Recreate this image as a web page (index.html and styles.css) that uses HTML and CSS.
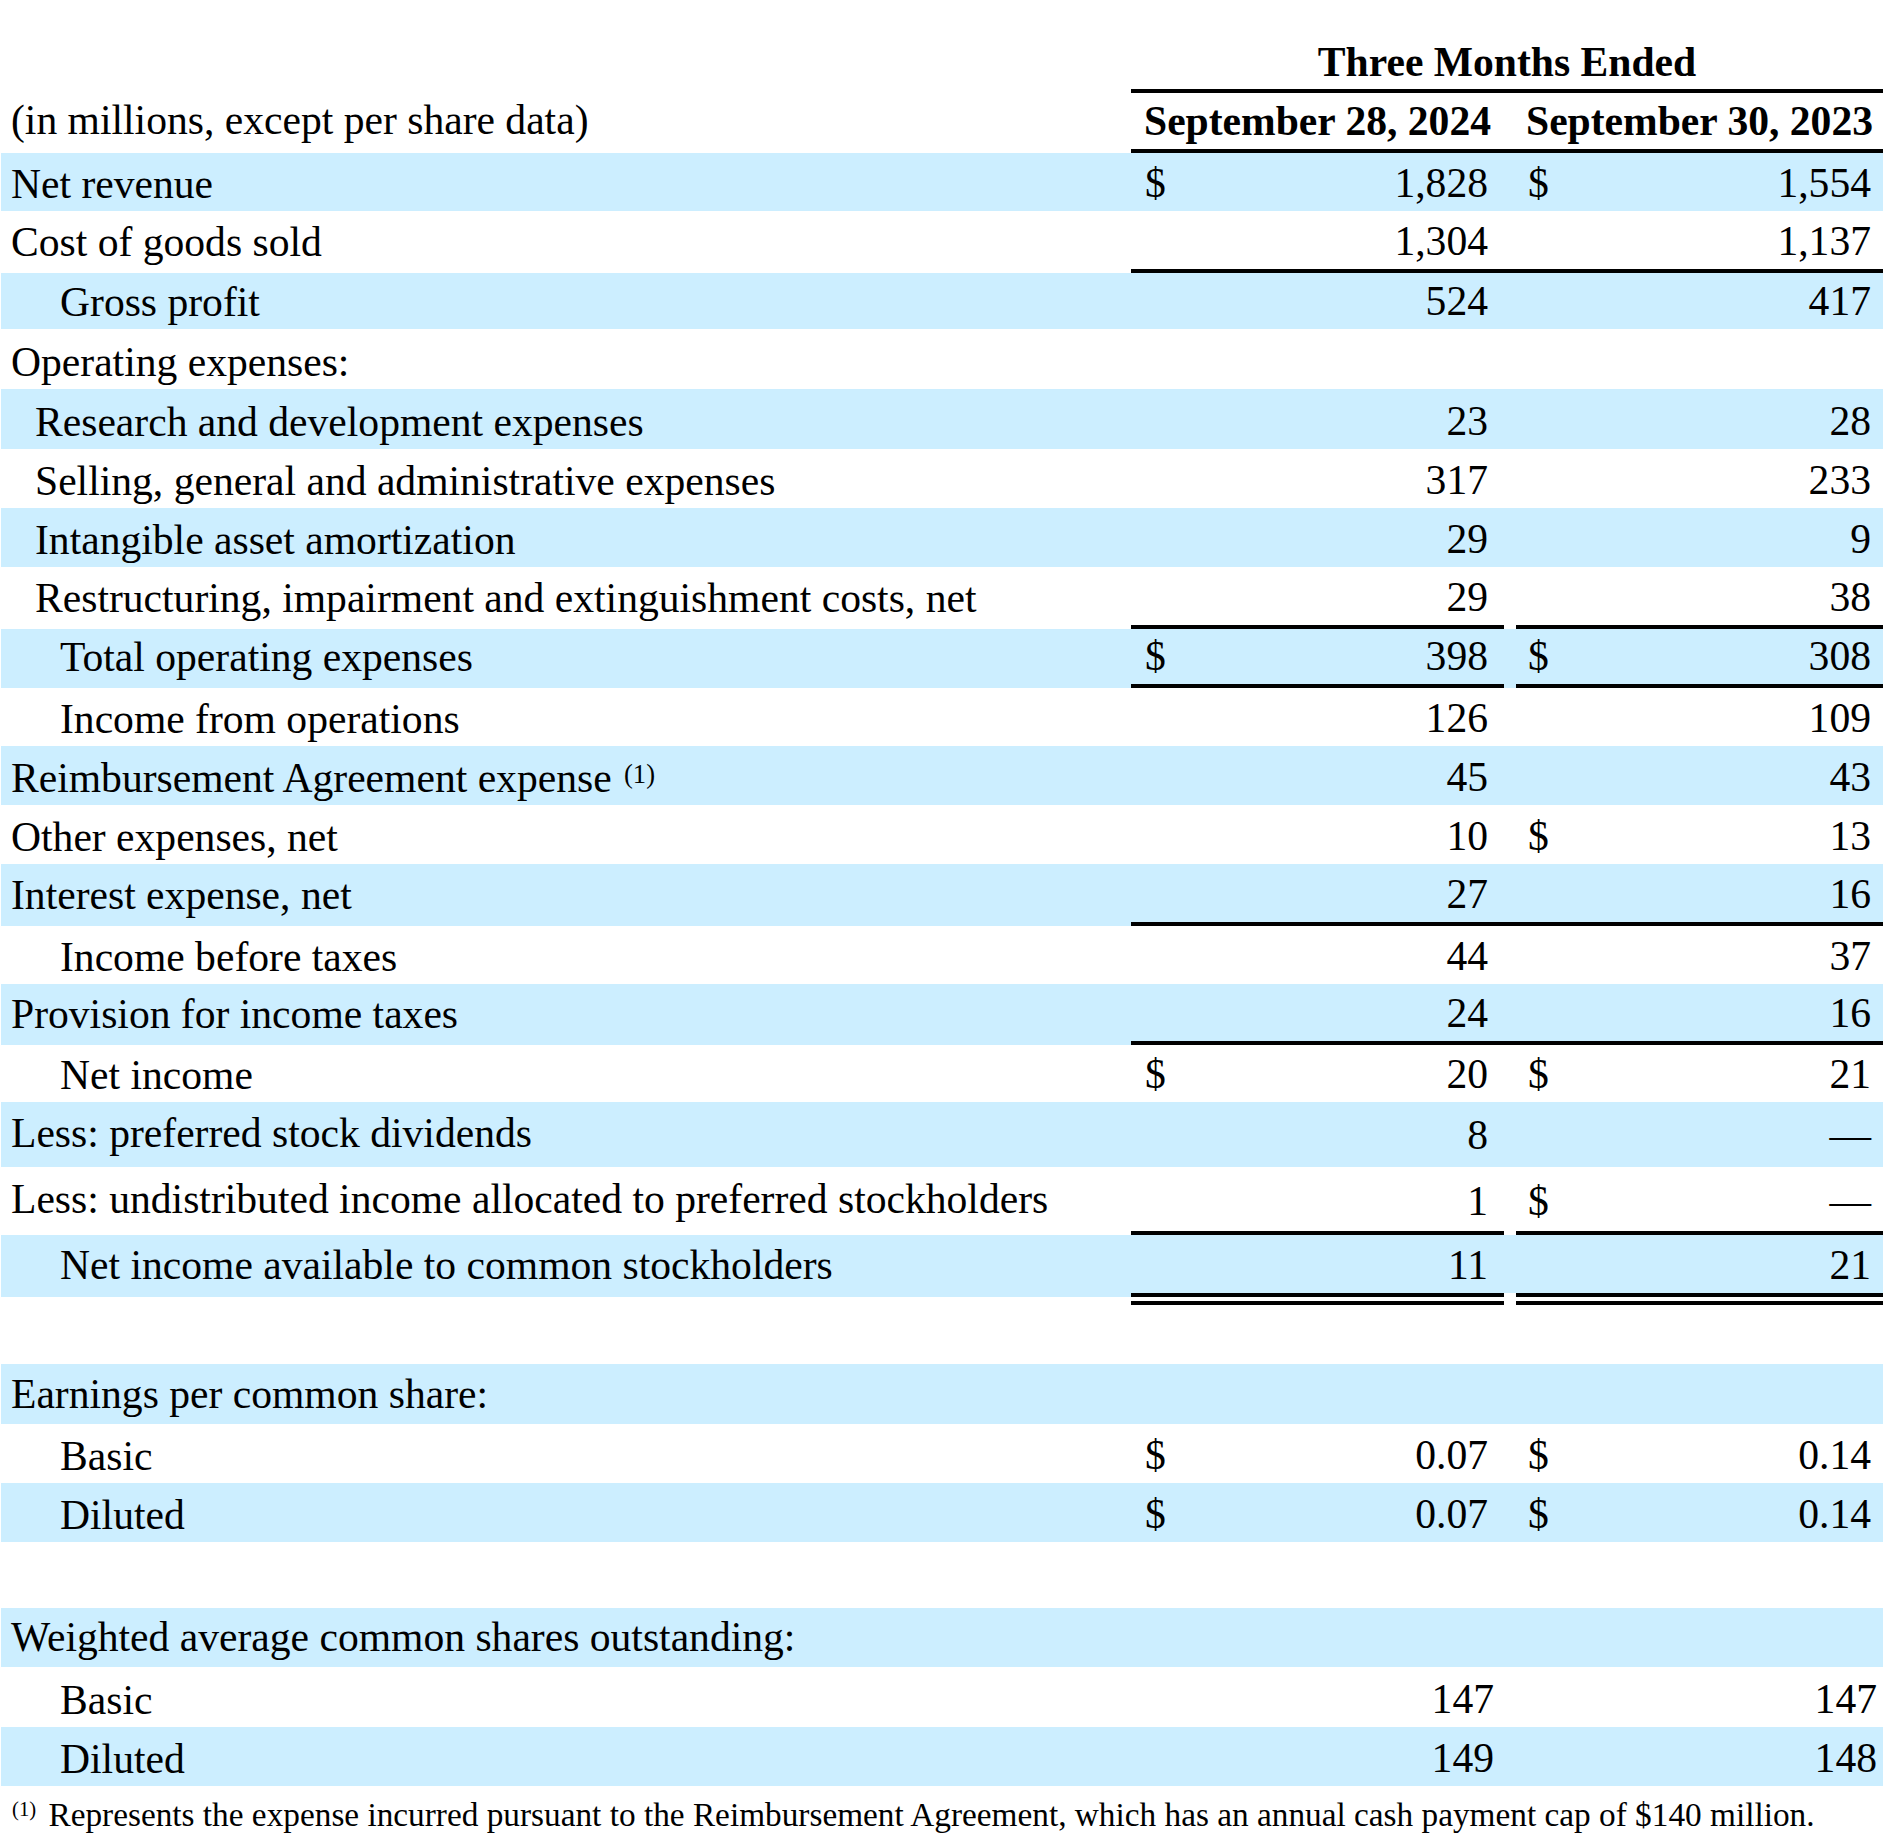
FILE: index.html
```html
<!DOCTYPE html>
<html lang="en">
<head>
<meta charset="utf-8">
<title>Condensed Statement of Operations</title>
<link rel="stylesheet" href="styles.css">
</head>
<body>
<div class="stmt">
  <div class="row h93 head1">
    <div class="lbl"></div>
    <div class="span-head">Three Months Ended</div>
  </div>
  <div class="row h60 head2">
    <div class="lbl">(in millions, except per share data)</div>
    <div class="colhead">September 28, 2024</div>
    <div class="gap"></div>
    <div class="colhead">September 30, 2023</div>
  </div>

  <div class="row h58 shade">
    <div class="lbl">Net revenue</div>
    <div class="num c1"><span class="cur">$</span><span class="val">1,828</span></div>
    <div class="gap"></div>
    <div class="num c2"><span class="cur">$</span><span class="val">1,554</span></div>
  </div>
  <div class="row h62 rule-full">
    <div class="lbl">Cost of goods sold</div>
    <div class="num c1"><span class="val">1,304</span></div>
    <div class="gap"></div>
    <div class="num c2"><span class="val">1,137</span></div>
  </div>
  <div class="row h56 shade">
    <div class="lbl ind2">Gross profit</div>
    <div class="num c1"><span class="val">524</span></div>
    <div class="gap"></div>
    <div class="num c2"><span class="val">417</span></div>
  </div>
  <div class="row h60">
    <div class="lbl">Operating expenses:</div>
    <div class="num c1"></div>
    <div class="gap"></div>
    <div class="num c2"></div>
  </div>
  <div class="row h60 shade">
    <div class="lbl ind1">Research and development expenses</div>
    <div class="num c1"><span class="val">23</span></div>
    <div class="gap"></div>
    <div class="num c2"><span class="val">28</span></div>
  </div>
  <div class="row h59">
    <div class="lbl ind1">Selling, general and administrative expenses</div>
    <div class="num c1"><span class="val">317</span></div>
    <div class="gap"></div>
    <div class="num c2"><span class="val">233</span></div>
  </div>
  <div class="row h59 shade">
    <div class="lbl ind1">Intangible asset amortization</div>
    <div class="num c1"><span class="val">29</span></div>
    <div class="gap"></div>
    <div class="num c2"><span class="val">9</span></div>
  </div>
  <div class="row h62 rule-split">
    <div class="lbl ind1">Restructuring, impairment and extinguishment costs, net</div>
    <div class="num c1"><span class="val">29</span></div>
    <div class="gap"></div>
    <div class="num c2"><span class="val">38</span></div>
  </div>
  <div class="row h59 shade rule-split">
    <div class="lbl ind2">Total operating expenses</div>
    <div class="num c1"><span class="cur">$</span><span class="val">398</span></div>
    <div class="gap"></div>
    <div class="num c2"><span class="cur">$</span><span class="val">308</span></div>
  </div>
  <div class="row h58">
    <div class="lbl ind2">Income from operations</div>
    <div class="num c1"><span class="val">126</span></div>
    <div class="gap"></div>
    <div class="num c2"><span class="val">109</span></div>
  </div>
  <div class="row h59 shade">
    <div class="lbl"><span>Reimbursement Agreement expense <sup class="mark">(1)</sup></span></div>
    <div class="num c1"><span class="val">45</span></div>
    <div class="gap"></div>
    <div class="num c2"><span class="val">43</span></div>
  </div>
  <div class="row h59">
    <div class="lbl">Other expenses, net</div>
    <div class="num c1"><span class="val">10</span></div>
    <div class="gap"></div>
    <div class="num c2"><span class="cur">$</span><span class="val">13</span></div>
  </div>
  <div class="row h62 shade rule-full">
    <div class="lbl">Interest expense, net</div>
    <div class="num c1"><span class="val">27</span></div>
    <div class="gap"></div>
    <div class="num c2"><span class="val">16</span></div>
  </div>
  <div class="row h58">
    <div class="lbl ind2">Income before taxes</div>
    <div class="num c1"><span class="val">44</span></div>
    <div class="gap"></div>
    <div class="num c2"><span class="val">37</span></div>
  </div>
  <div class="row h61 shade rule-full">
    <div class="lbl">Provision for income taxes</div>
    <div class="num c1"><span class="val">24</span></div>
    <div class="gap"></div>
    <div class="num c2"><span class="val">16</span></div>
  </div>
  <div class="row h57">
    <div class="lbl ind2">Net income</div>
    <div class="num c1"><span class="cur">$</span><span class="val">20</span></div>
    <div class="gap"></div>
    <div class="num c2"><span class="cur">$</span><span class="val">21</span></div>
  </div>
  <div class="row h65 shade tall">
    <div class="lbl">Less: preferred stock dividends</div>
    <div class="num c1"><span class="val">8</span></div>
    <div class="gap"></div>
    <div class="num c2"><span class="val">—</span></div>
  </div>
  <div class="row h68 rule-split tall-rule">
    <div class="lbl">Less: undistributed income allocated to preferred stockholders</div>
    <div class="num c1"><span class="val">1</span></div>
    <div class="gap"></div>
    <div class="num c2"><span class="cur">$</span><span class="val">—</span></div>
  </div>
  <div class="row h70 shade rule-double">
    <div class="lbl ind2">Net income available to common stockholders</div>
    <div class="num c1"><span class="val">11</span></div>
    <div class="gap"></div>
    <div class="num c2"><span class="val">21</span></div>
  </div>

  <div class="row h59 spacer"></div>

  <div class="row h60 shade section-head">
    <div class="lbl">Earnings per common share:</div>
    <div class="num c1"></div>
    <div class="gap"></div>
    <div class="num c2"></div>
  </div>
  <div class="row h59">
    <div class="lbl ind2">Basic</div>
    <div class="num c1"><span class="cur">$</span><span class="val">0.07</span></div>
    <div class="gap"></div>
    <div class="num c2"><span class="cur">$</span><span class="val">0.14</span></div>
  </div>
  <div class="row h59 shade">
    <div class="lbl ind2">Diluted</div>
    <div class="num c1"><span class="cur">$</span><span class="val">0.07</span></div>
    <div class="gap"></div>
    <div class="num c2"><span class="cur">$</span><span class="val">0.14</span></div>
  </div>

  <div class="row h66 spacer"></div>

  <div class="row h59 shade shares-head">
    <div class="lbl">Weighted average common shares outstanding:</div>
    <div class="num c1"></div>
    <div class="gap"></div>
    <div class="num c2"></div>
  </div>
  <div class="row h60 shares">
    <div class="lbl ind2">Basic</div>
    <div class="num c1"><span class="val">147</span></div>
    <div class="gap"></div>
    <div class="num c2"><span class="val">147</span></div>
  </div>
  <div class="row h59 shade shares">
    <div class="lbl ind2">Diluted</div>
    <div class="num c1"><span class="val">149</span></div>
    <div class="gap"></div>
    <div class="num c2"><span class="val">148</span></div>
  </div>

  <p class="footnote"><sup class="fn-mark">(1)</sup> Represents the expense incurred pursuant to the Reimbursement Agreement, which has an annual cash payment cap of $140 million.</p>
</div>
</body>
</html>
```

FILE: styles.css
```css
html, body {
  margin: 0;
  padding: 0;
  background: #ffffff;
}

body {
  font-family: "Liberation Serif", "Times New Roman", Times, serif;
  font-size: 41.6px;
  color: #000000;
  width: 1883px;
}

.stmt {
  margin-left: 1px;
  width: 1882px;
}

.row {
  display: grid;
  grid-template-columns: 1130px 373px 12px 367px;
  box-sizing: border-box;
}

.row > div {
  display: flex;
  align-items: flex-end;
  box-sizing: border-box;
  line-height: 41.6px;
  padding-bottom: 5px;
  white-space: nowrap;
  background-clip: padding-box;
}

/* row heights */
.h56 { height: 56px; }
.h57 { height: 57px; }
.h58 { height: 58px; }
.h59 { height: 59px; }
.h60 { height: 60px; }
.h61 { height: 61px; }
.h62 { height: 62px; }
.h65 { height: 65px; }
.h66 { height: 66px; }
.h68 { height: 68px; }
.h70 { height: 70px; }
.h93 { height: 93px; }

/* shaded rows */
.shade > div {
  background-color: #cceeff;
}

/* labels */
.lbl {
  padding-left: 10px;
}
.lbl.ind1 {
  padding-left: 34px;
}
.lbl.ind2 {
  padding-left: 59px;
}

/* number columns */
.num .val {
  margin-left: auto;
}
.row > .num {
  padding-bottom: 6px;
}
.c1 {
  padding-left: 14px;
  padding-right: 16px;
}
.c2 {
  padding-left: 12px;
  padding-right: 12px;
}

/* headers */
.span-head {
  grid-column: 2 / 5;
  justify-content: center;
  font-weight: bold;
  border-bottom: 4px solid #000;
}
.head1 > .span-head {
  padding-bottom: 5px;
}
.colhead {
  justify-content: center;
  font-weight: bold;
  border-bottom: 4px solid #000;
}
.head2 > .colhead,
.head2 > .gap {
  padding-bottom: 6px;
  border-bottom: 4px solid #000;
}
.head2 > .lbl {
  padding-bottom: 11px;
}

/* underline rules */
.rule-full > .num,
.rule-full > .gap {
  border-bottom: 4px solid #000;
}
.rule-split > .num {
  border-bottom: 4px solid #000;
}
.rule-full > .lbl,
.rule-split > .lbl {
  padding-bottom: 9px;
}
.rule-double > .num {
  border-bottom: 12px double #000;
}
.rule-double > .lbl {
  align-self: start;
  height: 62px;
  padding-bottom: 10px;
}
.rule-double > .gap {
  align-self: start;
  height: 58px;
}

/* taller rows */
.tall > .lbl {
  padding-bottom: 12px;
}
.tall > .num {
  padding-bottom: 10px;
}
.tall-rule > .lbl {
  padding-bottom: 14px;
}
.tall-rule > .num {
  padding-bottom: 8px;
}

/* section headings */
.section-head > .lbl {
  padding-bottom: 8px;
}

/* share counts sit a little further right */
.shares > .c1 {
  padding-right: 10px;
}
.shares > .c2 {
  padding-right: 6px;
}
.shares-head > .lbl {
  padding-bottom: 8px;
}

/* footnote markers */
.mark {
  font-size: 26.6px;
  line-height: 0;
  vertical-align: 9px;
  margin-left: 2px;
}

.footnote {
  margin: 0;
  padding: 9px 0 0 11px;
  font-size: 33.3px;
  line-height: 40px;
  white-space: nowrap;
}
.fn-mark {
  font-size: 20.7px;
  line-height: 0;
  vertical-align: 10px;
  margin-right: 4px;
}
```
